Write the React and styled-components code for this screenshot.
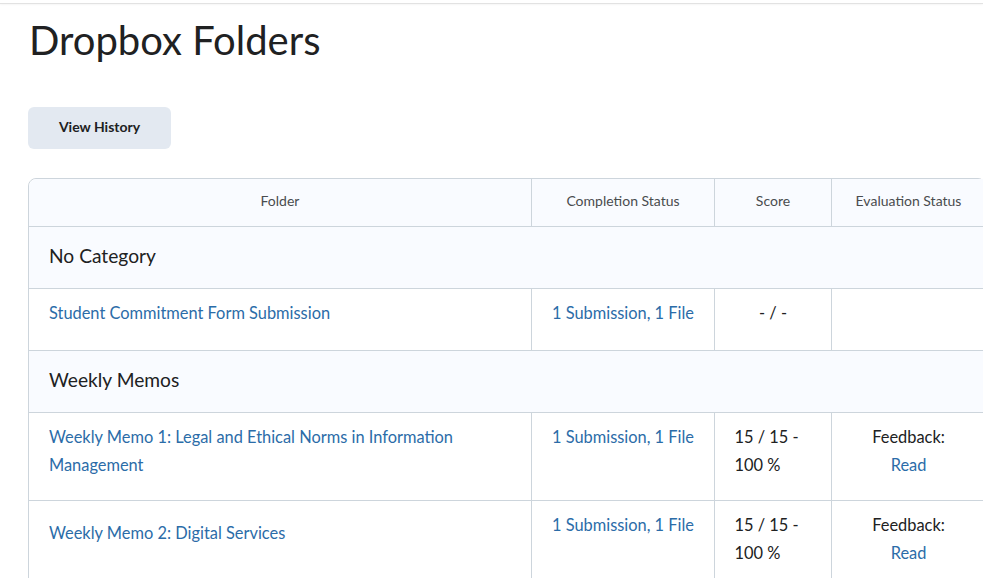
import React from "react";
import styled, { createGlobalStyle } from "styled-components";

const GlobalStyle = createGlobalStyle`
  html, body {
    margin: 0;
    padding: 0;
    background: #ffffff;
    overflow: hidden;
  }
  body {
    font-family: Lato, "Open Sans", "Liberation Sans", sans-serif;
    color: #202122;
  }
`;

const rows = [
  { category: "No Category" },
  {
    folder: "Student Commitment Form Submission",
    completion: "1 Submission, 1 File",
    score: "- / -",
    centered: true,
  },
  { category: "Weekly Memos" },
  {
    folder: "Weekly Memo 1: Legal and Ethical Norms in Information Management",
    completion: "1 Submission, 1 File",
    score: "15 / 15 - 100 %",
    feedback: true,
  },
  {
    folder: "Weekly Memo 2: Digital Services",
    completion: "1 Submission, 1 File",
    score: "15 / 15 - 100 %",
    feedback: true,
    shift: 8,
  },
];

const App = () => {
  return (
    <>
      <GlobalStyle />
      <TopEdge />
      <Page>
        <Title>Dropbox Folders</Title>
        <HistoryButton>View History</HistoryButton>
        <Table>
          <colgroup>
            <col style={{ width: 502 }} />
            <col style={{ width: 183 }} />
            <col style={{ width: 117 }} />
            <col style={{ width: 154 }} />
          </colgroup>
          <thead>
            <tr>
              <HeadCell>Folder</HeadCell>
              <HeadCell>Completion Status</HeadCell>
              <HeadCell>Score</HeadCell>
              <HeadCell>Evaluation Status</HeadCell>
            </tr>
          </thead>
          <tbody>
            {rows.map((row, i) =>
              row.category ? (
                <tr key={i}>
                  <CategoryCell colSpan={4}>{row.category}</CategoryCell>
                </tr>
              ) : (
                <tr key={i}>
                  <Cell $shift={row.shift}>
                    <Link href="#">{row.folder}</Link>
                  </Cell>
                  <Cell $center>
                    <Link href="#" $nowrap>
                      {row.completion}
                    </Link>
                  </Cell>
                  <Cell $center>
                    {row.centered ? (
                      row.score
                    ) : (
                      <Score>{row.score}</Score>
                    )}
                  </Cell>
                  <Cell $center>
                    {row.feedback && (
                      <>
                        <div>Feedback:</div>
                        <Link href="#">Read</Link>
                      </>
                    )}
                  </Cell>
                </tr>
              )
            )}
          </tbody>
        </Table>
      </Page>
    </>
  );
};

export default App;

const TopEdge = styled.div`
  height: 3px;
  border-bottom: 1px solid #e2e2e2;
  box-shadow: 0 1px 2px rgba(0, 0, 0, 0.04);
`;

const Page = styled.div`
  padding: 0 0 0 28px;
`;

const Title = styled.h1`
  margin: 12px 0 0 1px;
  font-size: 40px;
  font-weight: 400;
  line-height: 48px;
  color: #202122;
`;

const HistoryButton = styled.button`
  display: block;
  margin-top: 43px;
  width: 143px;
  height: 42px;
  padding: 0 0 4px;
  border: none;
  border-radius: 6px;
  background: #e3e9f1;
  color: #202122;
  font-family: Lato, "Open Sans", "Liberation Sans", sans-serif;
  font-size: 14px;
  font-weight: 700;
  cursor: pointer;
`;

const Table = styled.table`
  margin-top: 29px;
  width: 957px;
  table-layout: fixed;
  border-collapse: separate;
  border-spacing: 0;
  border: 1px solid #cdd5dc;
  border-radius: 8px;
  font-size: 16.4px;
`;

const HeadCell = styled.th`
  height: 47px;
  padding: 0 12px 4px;
  box-sizing: border-box;
  background: #f9fbff;
  color: #494c4e;
  font-size: 14px;
  font-weight: 400;
  text-align: center;
  border-left: 1px solid #cdd5dc;
  &:first-child {
    border-left: none;
    border-top-left-radius: 8px;
  }
`;

const CategoryCell = styled.td`
  height: 62px;
  box-sizing: border-box;
  padding: 0 20px 5px;
  background: #f9fbff;
  border-top: 1px solid #cdd5dc;
  font-size: 19.2px;
  color: #202122;
  vertical-align: middle;
`;

const Cell = styled.td`
  height: 30px;
  padding: ${(p) => 10 + (p.$shift || 0)}px ${(p) => (p.$center ? 12 : 20)}px 21px;
  border-top: 1px solid #cdd5dc;
  border-left: 1px solid #cdd5dc;
  vertical-align: top;
  line-height: 28px;
  text-align: ${(p) => (p.$center ? "center" : "left")};
  color: #202122;
  &:first-child {
    border-left: none;
  }
`;

const Link = styled.a`
  color: #2b6ca8;
  text-decoration: none;
  white-space: ${(p) => (p.$nowrap ? "nowrap" : "normal")};
`;

const Score = styled.span`
  display: inline-block;
  width: 77px;
  text-align: left;
`;
